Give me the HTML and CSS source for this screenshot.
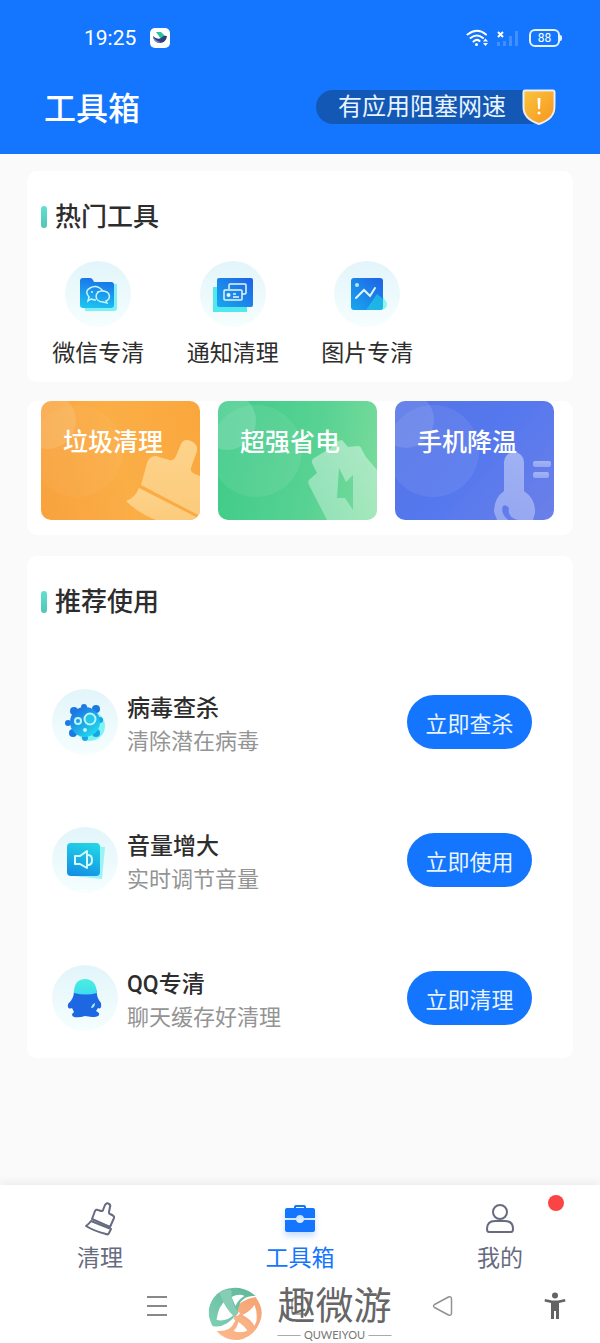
FILE: index.html
```html
<!DOCTYPE html>
<html lang="zh-CN">
<head>
<meta charset="utf-8">
<meta name="viewport" content="width=device-width, initial-scale=1">
<title>工具箱</title>
<link rel="stylesheet" href="styles.css">
</head>
<body>
<svg class="defs" width="0" height="0" aria-hidden="true">
  <defs>
    <linearGradient id="halo" x1="0" y1="0" x2="0" y2="1"><stop offset="0" stop-color="#e2f5fa"/><stop offset="1" stop-color="#f6fefe"/></linearGradient>
    <linearGradient id="blue" x1="0.6" y1="0" x2="0.4" y2="1"><stop offset="0" stop-color="#1a6fe8"/><stop offset="1" stop-color="#1cc3f0"/></linearGradient>
    <linearGradient id="deep" x1="0" y1="1" x2="1" y2="0"><stop offset="0" stop-color="#19a6ee"/><stop offset="1" stop-color="#1e62e6"/></linearGradient>
    <linearGradient id="cyan" x1="0.6" y1="0" x2="0.3" y2="1"><stop offset="0" stop-color="#22d3e6"/><stop offset="1" stop-color="#1390e4"/></linearGradient>
    <linearGradient id="aqua" x1="0" y1="0" x2="0" y2="1"><stop offset="0" stop-color="#4ceee0"/><stop offset="1" stop-color="#3ddcf0"/></linearGradient>
    <linearGradient id="virus" x1="0.2" y1="0.1" x2="0.8" y2="0.9"><stop offset="0" stop-color="#1c74e4"/><stop offset="1" stop-color="#22d8ec"/></linearGradient>
    <linearGradient id="shield" x1="0" y1="0" x2="1" y2="1"><stop offset="0" stop-color="#fbc53c"/><stop offset="1" stop-color="#f6941e"/></linearGradient>
    <linearGradient id="art" x1="0" y1="0" x2="0" y2="1"><stop offset="0" stop-color="#fff" stop-opacity="0.42"/><stop offset="1" stop-color="#fff" stop-opacity="0.32"/></linearGradient>
    <linearGradient id="broom" x1="0" y1="0" x2="0" y2="1"><stop offset="0" stop-color="#fdd38b"/><stop offset="1" stop-color="#fccb7c"/></linearGradient>
    <linearGradient id="green" x1="0" y1="1" x2="1" y2="0"><stop offset="0" stop-color="#7ed0b4"/><stop offset="1" stop-color="#5fb698"/></linearGradient>
    <linearGradient id="peach" x1="0" y1="1" x2="1" y2="0"><stop offset="0" stop-color="#fbb98c"/><stop offset="1" stop-color="#f5a374"/></linearGradient>
  </defs>
</svg>

<header class="header">
  <div class="status">
    <span class="time">19:25</span>
    <svg class="app-mark" width="20" height="20" viewBox="0 0 20 20" aria-hidden="true"><rect width="20" height="20" rx="5" fill="#fff"/><path d="M6 4h5l4 4-4 3z" fill="#2fc0a0"/><path d="M3 8q4 4 8 2 3-3 6-2-1 7-7 7-6 0-7-7z" fill="#2b3f78"/><path d="M3 8q2 5 8 6l-3 1Q3 13 3 8z" fill="#7a80d8"/></svg>
    <span class="spacer"></span>
    <svg class="wifi" width="23" height="18" viewBox="0 0 23 18" fill="none" stroke="#fff" stroke-width="2" stroke-linecap="round" aria-hidden="true"><path d="M1.500 5.500Q11 -2 20 5.500M4.500 9Q11 4 17 9M7.500 12.500Q11 9.500 13.500 12"/><circle cx="10.500" cy="15.500" r="1.500" fill="#fff" stroke="none"/><path d="M19.500 9.500l2.500 3h-5zM19.500 17l2.500-3h-5z" fill="#fff" stroke="none"/></svg>
    <svg class="signal" width="23" height="18" viewBox="0 0 23 18" aria-hidden="true"><path d="M2 3l5 5M7 3L2 8" stroke="#fff" stroke-width="2"/><path d="M2.500 17v-4M8.500 17v-5M14.500 17V7M20.500 17V2" stroke="#4290ff" stroke-width="3"/></svg>
    <span class="battery">88</span>
  </div>
  <div class="topbar">
    <h1 class="title">工具箱</h1>
    <button class="notice" type="button">
      <span>有应用阻塞网速</span>
      <svg class="shield" width="34" height="38" viewBox="0 0 34 38" aria-hidden="true"><path d="M3 2.500h28q1.500 0 1.500 2V19q0 12-15.500 17Q1.500 31 1.500 19V4.500q0-2 1.500-2z" fill="url(#shield)" stroke="#e9edf5" stroke-width="2"/><path d="M15.500 10h3l-.5 11h-2z" fill="#fff"/><circle cx="17" cy="25" r="1.500" fill="#fff"/></svg>
    </button>
  </div>
</header>

<main class="content">
  <section class="card hot">
    <h2 class="heading">热门工具</h2>
    <div class="tools">
      <button class="tool" type="button">
        <svg width="66" height="66" viewBox="0 0 66 66" aria-hidden="true"><circle cx="33" cy="33" r="33" fill="url(#halo)"/><path d="M18 23h34v24q0 3-3 3H20z" fill="#7ff0f4"/><path d="M15 20q0-3 3-3h7q2 0 3 2l1 2h17q3 0 3 3v20q0 3-3 3H18q-3 0-3-3z" fill="url(#blue)"/><g fill="none" stroke="#c9f5ff" stroke-width="1.500"><path d="M31 39q-3 0-5-1l-3 2 1-4q-5-6 1-9 7-4 13 3"/><path d="M37 30c9 0 9 8 4 10l1 2-4-1c-9 0-9-11-1-11z"/></g><g fill="#c9f5ff"><circle cx="27" cy="31" r="1"/><circle cx="33" cy="31" r="1"/></g></svg>
        <span>微信专清</span>
      </button>
      <button class="tool" type="button">
        <svg width="66" height="66" viewBox="0 0 66 66" aria-hidden="true"><circle cx="33" cy="33" r="33" fill="url(#halo)"/><path d="M13 26h34v25H13z" fill="#52e9ee"/><rect x="17" y="17" width="36" height="29" rx="2" fill="url(#deep)"/><g fill="none" stroke="#e4f7ff" stroke-width="1.500"><path d="M29 28v-4q0-1 1-1h15q1 0 1 1v8q0 1-1 1h-3"/><rect x="24" y="29" width="18" height="10" rx="1"/><path d="M33 33h3M33 36h6"/></g><circle cx="28.500" cy="34" r="2" fill="#e4f7ff"/></svg>
        <span>通知清理</span>
      </button>
      <button class="tool" type="button">
        <svg width="66" height="66" viewBox="0 0 66 66" aria-hidden="true"><circle cx="33" cy="33" r="33" fill="url(#halo)"/><path d="M34 49l13-16 6 9q0 6-4 6z" fill="#8cf4f2"/><rect x="17" y="17" width="32" height="32" rx="3" fill="url(#deep)"/><path d="M32 49l11-16 6 5v9q0 2-2 2z" fill="#20c8e4" opacity=".7"/><circle cx="23" cy="24" r="2" fill="#a8eeff"/><path d="M22 37l8-8 6 6 5-8" fill="none" stroke="#e4f7ff" stroke-width="2" stroke-linecap="round"/></svg>
        <span>图片专清</span>
      </button>
    </div>
  </section>

  <section class="card tiles">
    <button class="tile orange" type="button">
      <svg class="art" viewBox="0 0 159 119" preserveAspectRatio="xMaxYMax slice" aria-hidden="true"><circle cx="36" cy="50" r="46" fill="#fff" opacity=".04"/><circle cx="7" cy="20" r="28" fill="#fff" opacity=".12"/><g fill="url(#broom)"><path d="M100 84l6-22q2-7 9-7l13 4q5 1 7-4l5-12q3-6 10-3 7 3 6 10l-6 17q-1 4 4 6l5 2v40z"/><path d="M98 87l61 31v1h-44Q97 112 85 100q9-3 13-13z"/></g></svg>
      <span>垃圾清理</span>
    </button>
    <button class="tile mint" type="button">
      <svg class="art" viewBox="0 0 159 119" preserveAspectRatio="xMaxYMax slice" aria-hidden="true"><circle cx="38" cy="50" r="46" fill="#fff" opacity=".08"/><circle cx="9" cy="20" r="29" fill="#fff" opacity=".16"/><path fill="url(#art)" fill-rule="evenodd" d="M94 62q-1-3 2-5l17-10 3-6 8-2 6 7 10-1q3 0 4 4l4 7 11 13v50h-50L91 84q-2-4 1-6l7-6zM121 67l-2 30h8l8 12V74l-7 7z"/></svg>
      <span>超强省电</span>
    </button>
    <button class="tile indigo" type="button">
      <svg class="art" viewBox="0 0 159 119" preserveAspectRatio="xMaxYMax slice" aria-hidden="true"><circle cx="38" cy="50" r="46" fill="#fff" opacity=".07"/><circle cx="11" cy="19" r="28" fill="#fff" opacity=".11"/><g fill="url(#art)"><path fill-rule="evenodd" d="M109 61a10 10 0 0 1 20 0v29q12 8 11 22l-2 7h-36l-3-8q0-14 10-21zM108 105q-3 7 5 14h10q-11-3-9-12-3-4-6-2z"/><rect x="138" y="60" width="18" height="6" rx="2"/><rect x="138" y="71" width="16" height="6" rx="2"/></g></svg>
      <span>手机降温</span>
    </button>
  </section>

  <section class="card recommend">
    <h2 class="heading">推荐使用</h2>
    <ul class="list">
      <li class="row">
        <svg width="66" height="66" viewBox="0 0 66 66" aria-hidden="true"><circle cx="33" cy="33" r="33" fill="url(#halo)"/><circle cx="38" cy="37" r="15" fill="#7ff2f4"/><g fill="#1b79e2"><circle cx="32" cy="18" r="3"/><circle cx="44" cy="20" r="4"/><circle cx="22" cy="22" r="4"/><circle cx="16" cy="34" r="3"/><circle cx="21" cy="44" r="4"/></g><g fill="#18a5e6"><circle cx="33" cy="49" r="3"/><circle cx="44" cy="44" r="4"/><circle cx="48" cy="31" r="3"/></g><circle cx="33" cy="33" r="15" fill="url(#virus)"/><circle cx="38" cy="30" r="5.500" fill="#25c5e8" stroke="#baf7fa" stroke-width="2"/><circle cx="26" cy="32" r="3" fill="none" stroke="#baf7fa" stroke-width="2"/><circle cx="33" cy="41" r="2" fill="#baf7fa"/></svg>
        <div class="info"><h3>病毒查杀</h3><p>清除潜在病毒</p></div>
        <button class="action" type="button">立即查杀</button>
      </li>
      <li class="row">
        <svg width="66" height="66" viewBox="0 0 66 66" aria-hidden="true"><circle cx="33" cy="33" r="33" fill="url(#halo)"/><path d="M22 18l31 2-3 32-29-3z" fill="#9af4f6"/><rect x="15" y="16" width="33" height="33" rx="4" fill="url(#cyan)"/><g fill="none" stroke="#d5fbff" stroke-width="2" stroke-linejoin="round"><path d="M23 29h5l7-5v17l-7-4h-5z"/><path d="M36 28q4 0 4 5t-4 5"/></g></svg>
        <div class="info"><h3>音量增大</h3><p>实时调节音量</p></div>
        <button class="action" type="button">立即使用</button>
      </li>
      <li class="row">
        <svg width="66" height="66" viewBox="0 0 66 66" aria-hidden="true"><circle cx="33" cy="33" r="33" fill="url(#halo)"/><path d="M22 26h23q-1 6 4 12 1 7-3 5l-2 3q4 2 3 4-1 2-7 2l-7-1q-6 2-11 1-4-2 0-5l-2-4q-5 2-4-4 6-5 6-13z" fill="#1d68e2"/><path d="M22 28q0-14 11-14t12 14q-11 3-23 0z" fill="url(#aqua)"/><path d="M39 43q1-4 4-5 0 5-4 5z" fill="#a6efff"/></svg>
        <div class="info"><h3>QQ专清</h3><p>聊天缓存好清理</p></div>
        <button class="action" type="button">立即清理</button>
      </li>
    </ul>
  </section>
</main>

<footer class="footer">
  <nav class="tabs">
    <a class="tab" href="#clean">
      <svg width="36" height="36" viewBox="0 0 36 36" fill="none" stroke="#666b80" stroke-width="2" stroke-linejoin="round" aria-hidden="true"><path d="M10 18l3-8q1-2 3-1l3 1q2 0 2-1l2-5q2-3 4-1 2 1 1 3l-1 5q0 2 1 2 5 2 4 4l-4 9z"/><path d="M9 20l20 8-2 4q-1 2-3 1Q12 30 4 25q3-2 5-5z"/></svg>
      <span>清理</span>
    </a>
    <a class="tab current" href="#tools" aria-current="page">
      <svg width="36" height="36" viewBox="0 0 36 36" aria-hidden="true"><path d="M12 7V6q0-2 2-2h8q2 0 2 2v1h7q2 0 2 2v8H22q-1-3-4-3t-4 3H3V9q0-2 2-2zM14 7h8V6h-8z" fill="#1476fe" fill-rule="evenodd"/><path d="M3 19h11q1 3 4 3t4-3h11v10q0 2-2 2H5q-2 0-2-2z" fill="#1476fe"/></svg>
      <span>工具箱</span>
    </a>
    <a class="tab" href="#mine">
      <svg width="36" height="36" viewBox="0 0 36 36" fill="none" stroke="#666b80" stroke-width="2" aria-hidden="true"><circle cx="18" cy="11" r="7"/><path d="M5 28q0-8 8-8h10q8 0 8 8 0 3-2 3H7q-2 0-2-3z"/></svg>
      <span>我的</span>
      <i class="dot"></i>
    </a>
  </nav>
  <div class="sysbar">
    <button type="button" aria-label="菜单"><svg width="22" height="22" viewBox="0 0 22 22" stroke="#888" stroke-width="2" aria-hidden="true"><path d="M1 2h20M1 11h20M1 20h20"/></svg></button>
    <button type="button" aria-label="主页"><svg width="22" height="22" viewBox="0 0 22 22" fill="none" stroke="#999" stroke-width="1.500" aria-hidden="true"><rect x="3" y="3" width="16" height="16" rx="3"/></svg></button>
    <button type="button" aria-label="返回"><svg width="22" height="22" viewBox="0 0 22 22" fill="none" stroke="#929292" stroke-width="1.500" stroke-linejoin="round" aria-hidden="true"><path d="M2.500 9.500l14-7.500q3-1 3 2v14q0 3-3 2l-14-7.500q-2-1.500 0-3z"/></svg></button>
    <button class="access" type="button" aria-label="无障碍"><svg width="22" height="28" viewBox="0 0 22 28" fill="#636363" aria-hidden="true"><circle cx="11" cy="3.500" r="3"/><path d="M1 7l7 1.500h6L21 7l.5 2.500L15 11v16h-3v-8h-2v8H7V11L.5 9.500z"/></svg></button>
  </div>
  <div class="brand">
    <svg width="54" height="54" viewBox="0 0 54 54" aria-hidden="true"><circle cx="27" cy="27" r="25" fill="#fff"/><path d="M26 24Q32 12 47 10q10 13 4 26-6 14-21 17-13 1-22-9 14 1 18-9 2-6 6-9z" fill="url(#peach)"/><path d="M28 27Q17 42 4 39-4 24 5 11 14-1 31 1q10 2 16 8-10-1-15 6z" fill="url(#green)"/><path d="M8 33q2-15 10-20 2 9 8 14-7 8-18 6z" fill="#fff"/><path d="M34 28q8-4 12-10 3 7 2 16l-2 5q-4-7-12-11z" fill="#fff"/><path d="M23 10q8-4 13-1-6 3-9 10z" fill="#fff"/><path d="M30 34q6 2 10 9-7 4-15 1 4-4 5-10z" fill="#fff"/><path d="M11 5q7-3 12-2-1 13 7 23l-4 4Q15 20 11 5z" fill="#86cdb5"/><path d="M27 28q12 3 19 14l-5 6q-3-9-16-16z" fill="#f9b284"/></svg>
    <div class="brand-text"><strong>趣微游</strong><small>QUWEIYOU</small></div>
  </div>
</footer>
</body>
</html>
```

FILE: styles.css
```css
* {
  box-sizing: border-box;
}

body {
  margin: 0;
  min-height: 100vh;
  display: flex;
  flex-direction: column;
  background: #fafafa;
  color: #2d2d2d;
  font-family: Roboto, "Noto Sans CJK SC", sans-serif;
}

h1, h2, h3, p, ul {
  margin: 0;
  padding: 0;
}

button {
  padding: 0;
  border: 0;
  background: none;
  color: inherit;
  font: inherit;
  cursor: pointer;
}

svg {
  display: block;
  flex: none;
}

.defs {
  position: absolute;
}

/* Header */
.header {
  height: 154px;
  background: #1476fe;
  color: #fff;
}

.status {
  display: flex;
  align-items: center;
  height: 76px;
  padding: 0 38px 0 84px;
}

.time {
  font-size: 21px;
}

.app-mark {
  margin-left: 14px;
}

.spacer {
  flex: 1;
}

.signal {
  margin: 0 10px 0 7px;
}

.battery {
  position: relative;
  width: 31px;
  height: 18px;
  margin-right: 2px;
  border: 2px solid #e6f1ff;
  border-radius: 6px;
  font-size: 12px;
  line-height: 14px;
  text-align: center;
}

.battery::after {
  content: "";
  position: absolute;
  top: 4px;
  right: -4px;
  width: 2px;
  height: 6px;
  border-radius: 0 2px 2px 0;
  background: #e6f1ff;
}

.topbar {
  display: flex;
  align-items: center;
  justify-content: space-between;
  height: 62px;
  padding: 0 44px;
}

.title {
  padding-top: 4px;
  font-size: 32px;
  font-weight: 500;
  line-height: 40px;
}

.notice {
  display: flex;
  align-items: center;
  gap: 16px;
  height: 34px;
  padding-left: 22px;
  border-radius: 17px;
  background: #1458b6;
  color: #e8f4ff;
  font-size: 24px;
  line-height: 34px;
}

.notice span {
  padding-bottom: 1px;
}

/* Cards */
.content {
  flex: 1;
  padding: 17px 27px 0;
}

.card {
  border-radius: 10px;
  background: #fff;
}

.heading {
  display: flex;
  align-items: center;
  gap: 8px;
  padding-left: 14px;
  font-size: 26px;
  font-weight: 500;
  line-height: 38px;
}

.heading::before {
  content: "";
  width: 6px;
  height: 22px;
  border-radius: 3px;
  background: linear-gradient(#5fe0d4, #53c4b4);
}

.hot {
  padding: 27px 4px 12px 0;
}

.tools {
  display: grid;
  grid-template-columns: repeat(4, 1fr);
  padding: 25px 0 0 4px;
}

.tool {
  display: flex;
  flex-direction: column;
  align-items: center;
  gap: 11px;
  font-size: 23px;
  line-height: 32px;
}

.tiles {
  display: grid;
  grid-template-columns: repeat(3, 1fr);
  gap: 18px;
  margin-top: 19px;
  padding: 0 19px 15px 14px;
}

.tile {
  position: relative;
  overflow: hidden;
  display: flex;
  align-items: flex-start;
  height: 119px;
  padding: 24px 0 0 22px;
  border-radius: 10px;
  color: #fff;
  font-size: 25px;
  font-weight: 500;
  line-height: 36px;
  text-align: left;
}

.tile span {
  position: relative;
}

.art {
  position: absolute;
  inset: 0;
  width: 100%;
  height: 100%;
}

.orange {
  background: linear-gradient(75deg, #f8a23d, #fbae46 50%, #faa73d);
}

.mint {
  background: linear-gradient(100deg, #3ecb88, #58d293 60%, #7bdc9c);
}

.indigo {
  background: linear-gradient(130deg, #5674e6, #5578ee 50%, #6c80e8);
}

.recommend {
  margin-top: 21px;
  padding: 27px 0 24px;
}

.list {
  display: flex;
  flex-direction: column;
  gap: 66px;
  padding: 65px 41px 0 25px;
  list-style: none;
}

.row {
  display: flex;
  align-items: center;
  gap: 9px;
}

.info {
  flex: 1;
  padding-top: 6px;
}

.info h3 {
  font-size: 23px;
  font-weight: 500;
  line-height: 33px;
}

.info p {
  color: #949494;
  font-size: 22px;
  line-height: 33px;
}

.action {
  width: 125px;
  height: 54px;
  border-radius: 27px;
  background: #1476fe;
  color: #e8f4ff;
  font-size: 22px;
}

/* Footer */
.footer {
  position: relative;
  background: #fff;
  box-shadow: 0 -3px 8px rgba(0, 0, 0, 0.06);
}

.tabs {
  display: grid;
  grid-template-columns: repeat(3, 1fr);
}

.tab {
  position: relative;
  display: flex;
  flex-direction: column;
  align-items: center;
  gap: 6px;
  padding-top: 16px;
  color: #666b80;
  font-size: 23px;
  line-height: 32px;
  text-decoration: none;
}

.current {
  color: #1476fe;
}

.current svg {
  filter: drop-shadow(0 4px 3px rgba(20, 118, 254, 0.25));
}

.dot {
  position: absolute;
  top: 10px;
  right: 36px;
  width: 16px;
  height: 16px;
  border-radius: 50%;
  background: #fb4444;
}

.sysbar {
  position: relative;
  display: flex;
  align-items: center;
  justify-content: space-between;
  height: 68px;
  padding: 0 146px 6px;
}

.access {
  position: absolute;
  top: 17px;
  right: 34px;
}

.brand {
  position: absolute;
  bottom: 2px;
  left: 50%;
  display: flex;
  align-items: flex-end;
  gap: 15px;
  transform: translateX(-50%);
  pointer-events: none;
}

.brand-text {
  display: flex;
  flex-direction: column;
  color: #666;
}

.brand strong {
  font-size: 38px;
  font-weight: 400;
  line-height: 46px;
}

.brand small {
  display: flex;
  align-items: center;
  gap: 3px;
  color: #777;
  font-family: Lato, sans-serif;
  font-size: 11px;
  line-height: 12px;
}

.brand small::before,
.brand small::after {
  content: "";
  flex: 1;
  height: 1px;
  background: #aaa;
}
```
